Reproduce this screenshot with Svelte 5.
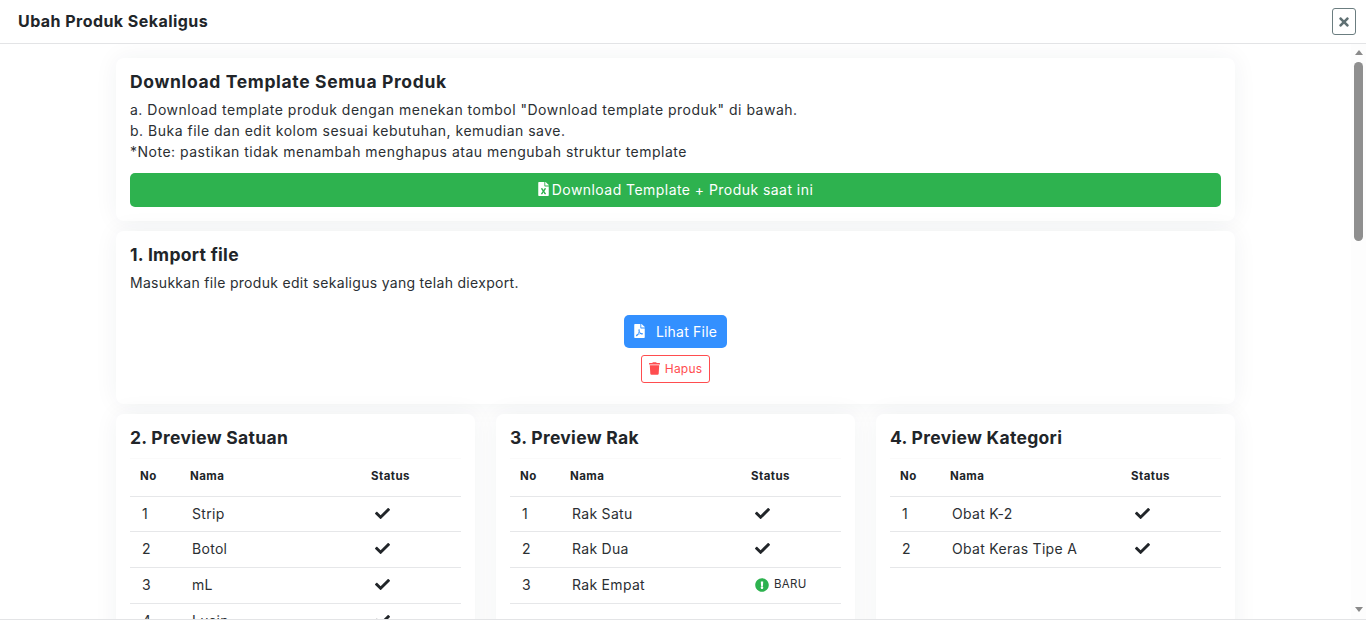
<script lang="ts">
	const CHECK =
		'M173.898 439.404l-166.4-166.4c-9.997-9.997-9.997-26.206 0-36.204l36.203-36.204c9.997-9.998 26.207-9.998 36.204 0L192 312.69 432.095 72.596c9.997-9.997 26.207-9.997 36.204 0l36.203 36.204c9.997 9.997 9.997 26.206 0 36.204l-294.4 294.401c-9.998 9.997-26.207 9.997-36.204-.001z';
	const ALERT =
		'M504 256c0 136.997-111.043 248-248 248S8 392.997 8 256C8 119.083 119.043 8 256 8s248 111.083 248 248zm-248 50c-25.405 0-46 20.595-46 46s20.595 46 46 46 46-20.595 46-46-20.595-46-46-46zm-43.673-165.346l7.418 136c.347 6.364 5.609 11.346 11.982 11.346h48.546c6.373 0 11.635-4.982 11.982-11.346l7.418-136c.375-6.874-5.098-12.654-11.982-12.654h-63.383c-6.884 0-12.356 5.78-11.981 12.654z';

	const previews = [
		{
			title: '2. Preview Satuan',
			rows: [
				{ name: 'Strip', isNew: false },
				{ name: 'Botol', isNew: false },
				{ name: 'mL', isNew: false },
				{ name: 'Lusin', isNew: false }
			]
		},
		{
			title: '3. Preview Rak',
			rows: [
				{ name: 'Rak Satu', isNew: false },
				{ name: 'Rak Dua', isNew: false },
				{ name: 'Rak Empat', isNew: true }
			]
		},
		{
			title: '4. Preview Kategori',
			rows: [
				{ name: 'Obat K-2', isNew: false },
				{ name: 'Obat Keras Tipe A', isNew: false }
			]
		}
	];
</script>

<div class="modal">
	<header class="modal-head">
		<h1>Ubah Produk Sekaligus</h1>
		<button type="button" class="close-btn" aria-label="Tutup">
			<svg viewBox="0 0 352 512" width="10" height="14"><path fill="currentColor" d="M242.72 256l100.07-100.07c12.28-12.28 12.28-32.19 0-44.48l-22.24-22.24c-12.28-12.28-32.19-12.28-44.48 0L176 189.28 75.93 89.21c-12.28-12.28-32.19-12.28-44.48 0L9.21 111.45c-12.28 12.28-12.28 32.19 0 44.48L109.28 256 9.21 356.07c-12.28 12.28-12.28 32.19 0 44.48l22.24 22.24c12.28 12.28 32.2 12.28 44.48 0L176 322.72l100.07 100.07c12.28 12.28 32.2 12.28 44.48 0l22.24-22.24c12.28-12.28 12.28-32.19 0-44.48L242.72 256z"/></svg>
		</button>
	</header>

	<div class="modal-body">
		<div class="content">
			<section class="card">
				<h2 class="wide">Download Template Semua Produk</h2>
				<p class="steps">
					a. Download template produk dengan menekan tombol "Download template produk" di bawah.<br />
					b. Buka file dan edit kolom sesuai kebutuhan, kemudian save.<br />
					*Note: pastikan tidak menambah menghapus atau mengubah struktur template
				</p>
				<button type="button" class="btn-download">
					<svg viewBox="0 0 384 512" width="11" height="14"><path fill="currentColor" d="M224 136V0H24C10.7 0 0 10.7 0 24v464c0 13.3 10.7 24 24 24h336c13.3 0 24-10.7 24-24V160H248c-13.2 0-24-10.8-24-24zm60.1 106.5L224 336l60.1 93.5c5.1 8-.6 18.5-10.1 18.5h-34.9c-4.4 0-8.5-2.4-10.6-6.3C208.9 405.5 192 373 192 373c-6.1 14.1-9.5 19.1-36.6 68.8-2.1 3.9-6.1 6.3-10.5 6.3H110c-9.5 0-15.2-10.5-10.1-18.5l60.3-93.5-60.3-93.5c-5.2-8 .6-18.5 10.1-18.5h34.8c4.4 0 8.5 2.4 10.6 6.3 26.1 48.8 20 33.6 36.6 68.5 0 0 6.1-11.7 36.6-68.5 2.1-3.9 6.2-6.3 10.6-6.3H274c9.5-.1 15.2 10.4 10.1 18.4zM384 121.9v6.1H256V0h6.1c6.4 0 12.5 2.5 17 7l97.9 98c4.5 4.5 7 10.6 7 16.9z"/></svg>
					Download Template + Produk saat ini
				</button>
			</section>

			<section class="card import">
				<h2>1. Import file</h2>
				<p class="import-desc">Masukkan file produk edit sekaligus yang telah diexport.</p>
				<div class="file-actions">
					<button type="button" class="btn-file">
						<svg viewBox="0 0 384 512" width="11" height="14"><path fill="currentColor" d="M181.9 256.1c-5-16-4.9-46.9-2-46.9 8.4 0 7.6 36.9 2 46.9zm-1.7 47.2c-7.7 20.2-17.3 43.3-28.4 62.7 18.3-7 39-17.2 62.9-21.9-12.7-9.6-24.9-23.4-34.5-40.8zM86.1 428.1c0 .8 13.2-5.4 34.9-40.2-6.7 6.3-29.1 24.5-34.9 40.2zM248 160h136v328c0 13.3-10.7 24-24 24H24c-13.3 0-24-10.7-24-24V24C0 10.7 10.7 0 24 0h200v136c0 13.2 10.8 24 24 24zm-8 171.8c-20-12.2-33.3-29-42.7-53.8 4.5-18.5 11.6-46.6 6.2-64.2-4.7-29.4-42.4-26.5-47.8-6.8-5 18.3-.4 44.1 8.1 77-11.6 27.6-28.7 64.6-40.8 85.8-.1 0-.1.1-.2.1-27.1 13.9-73.6 44.5-54.5 68 5.6 6.9 16 10 21.5 10 17.9 0 35.7-18 61.1-61.8 25.8-8.5 54.1-19.1 79-23.2 21.7 11.8 47.1 19.5 64 19.5 29.2 0 31.2-32 19.7-43.4-13.9-13.6-54.3-9.7-73.6-7.2zM377 105L279 7c-4.5-4.5-10.6-7-17-7h-6v128h128v-6.1c0-6.3-2.5-12.4-7-16.9zm-74.1 255.3c4.1-2.7-2.5-11.9-42.8-9 37.1 15.8 42.8 9 42.8 9z"/></svg>
						Lihat File
					</button>
					<button type="button" class="btn-remove">
						<svg viewBox="0 0 448 512" width="11" height="13"><path fill="currentColor" d="M432 32H312l-9.4-18.7A24 24 0 0 0 281.1 0H166.8a23.72 23.72 0 0 0-21.4 13.3L136 32H16A16 16 0 0 0 0 48v32a16 16 0 0 0 16 16h416a16 16 0 0 0 16-16V48a16 16 0 0 0-16-16zM53.2 467a48 48 0 0 0 47.9 45h245.8a48 48 0 0 0 47.9-45L416 128H32z"/></svg>
						Hapus
					</button>
				</div>
			</section>

			<div class="preview-grid">
				{#each previews as preview (preview.title)}
					<section class="card">
						<h2>{preview.title}</h2>
						<table>
							<thead>
								<tr>
									<th class="col-no">No</th>
									<th>Nama</th>
									<th class="col-status">Status</th>
								</tr>
							</thead>
							<tbody>
								{#each preview.rows as row, i (row.name)}
									<tr>
										<td>{i + 1}</td>
										<td>{row.name}</td>
										<td>
											{#if row.isNew}
												<span class="badge-new">
													<svg viewBox="0 0 512 512" width="14" height="14"><path fill="#2db24f" d={ALERT} /></svg>
													BARU
												</span>
											{:else}
												<svg class="check" viewBox="0 0 512 512" width="15" height="15"><path fill="currentColor" d={CHECK} /></svg>
											{/if}
										</td>
									</tr>
								{/each}
							</tbody>
						</table>
					</section>
				{/each}
			</div>
		</div>

		<div class="scrollbar" aria-hidden="true">
			<span class="arrow up"></span>
			<span class="thumb"></span>
			<span class="arrow down"></span>
		</div>
	</div>

	<footer class="modal-foot"></footer>
</div>

<style>
	:global(body) {
		margin: 0;
		background: #fff;
	}

	.modal {
		height: 100vh;
		display: flex;
		flex-direction: column;
		overflow: hidden;
		font-family: Inter, 'Liberation Sans', sans-serif;
		font-size: 14px;
		line-height: 21px;
		letter-spacing: 0.3px;
		color: #2b2f33;
	}

	.modal-head {
		flex: none;
		height: 43px;
		padding: 0 10px 0 18px;
		display: flex;
		align-items: center;
		justify-content: space-between;
		background: #fff;
		border-bottom: 1px solid #e3e4e6;
	}

	.modal-head h1 {
		margin: 0;
		font-size: 16px;
		font-weight: 700;
		letter-spacing: 0.45px;
		color: #212529;
	}

	.close-btn {
		width: 24px;
		height: 27px;
		padding: 0;
		display: flex;
		align-items: center;
		justify-content: center;
		background: #fff;
		border: 1px solid #6b7d80;
		border-radius: 3px;
		color: #5f7073;
	}

	.modal-body {
		flex: 1;
		min-height: 0;
		display: flex;
		overflow: hidden;
	}

	.content {
		flex: 1;
		min-width: 0;
		padding: 14px 116px 0;
		display: flex;
		flex-direction: column;
		gap: 10px;
	}

	.content > * {
		flex: none;
	}

	.card {
		padding: 14px;
		background: #fff;
		border-radius: 8px;
		box-shadow: 0 0 24px rgba(31, 45, 61, 0.06);
	}

	.card h2 {
		margin: 0;
		font-size: 17.5px;
		line-height: 20px;
		font-weight: 700;
		letter-spacing: 0.3px;
		color: #212529;
	}

	.card h2.wide {
		letter-spacing: 0.65px;
	}

	.steps {
		margin: 7px 0 11px;
		letter-spacing: 0.5px;
	}

	.btn-download {
		width: 100%;
		height: 34px;
		padding-bottom: 3px;
		display: flex;
		align-items: center;
		justify-content: center;
		gap: 3px;
		font: inherit;
		letter-spacing: 0.45px;
		color: #fff;
		background: #2eb24f;
		border: none;
		border-radius: 5px;
	}

	.import {
		height: 173px;
		box-sizing: border-box;
	}

	.import-desc {
		margin: 7px 0 0;
	}

	.file-actions {
		margin-top: 22px;
		display: flex;
		flex-direction: column;
		align-items: center;
		gap: 7px;
	}

	.btn-file {
		width: 103px;
		height: 33px;
		padding: 0 0 1px;
		display: flex;
		align-items: center;
		justify-content: center;
		gap: 11px;
		font: inherit;
		letter-spacing: 0.2px;
		color: #fff;
		background: #3390ff;
		border: none;
		border-radius: 5px;
	}

	.btn-remove {
		width: 69px;
		height: 28px;
		padding: 0 0 1px;
		display: flex;
		align-items: center;
		justify-content: center;
		gap: 5px;
		font: inherit;
		font-size: 12px;
		letter-spacing: 0.2px;
		color: #ff4d4f;
		background: #fff;
		border: 1px solid #ff4d4f;
		border-radius: 3px;
	}

	.preview-grid {
		display: grid;
		grid-template-columns: repeat(3, 359px);
		justify-content: space-between;
		align-items: stretch;
	}

	table {
		width: 331px;
		margin-top: 10px;
		table-layout: fixed;
		border-collapse: collapse;
	}

	thead tr {
		border-top: 1px solid #fafafa;
	}

	th {
		height: 34px;
		padding: 0 10px 3px;
		text-align: left;
		font-size: 11.5px;
		font-weight: 700;
		letter-spacing: 0.45px;
		color: #212529;
		border-bottom: 1px solid #e6e7e9;
	}

	.col-no {
		width: 30px;
	}

	.col-status {
		width: 80px;
	}

	td {
		height: 33px;
		padding: 0 12px 2px;
		border-bottom: 1px solid #e6e7e9;
	}

	tbody tr:first-child td {
		height: 32px;
	}

	.check {
		display: block;
		margin-left: 2px;
		color: #212529;
	}

	.badge-new {
		display: flex;
		align-items: center;
		gap: 5px;
		margin-left: 2px;
		font-size: 11.5px;
	}

	.scrollbar {
		flex: none;
		width: 15px;
		background: #fdfdfd;
		display: flex;
		flex-direction: column;
		align-items: center;
	}

	.thumb {
		width: 9px;
		height: 179px;
		margin-top: 7px;
		background: #8f8f8f;
		border-radius: 5px;
	}

	.arrow {
		width: 0;
		height: 0;
		border-left: 4px solid transparent;
		border-right: 4px solid transparent;
	}

	.arrow.up {
		margin-top: 6px;
		border-bottom: 5px solid #8a8a8a;
	}

	.arrow.down {
		margin-top: auto;
		margin-bottom: 7px;
		border-top: 5px solid #8a8a8a;
	}

	.modal-foot {
		flex: none;
		height: 21px;
		background: #fff;
		border-top: 1px solid #e3e4e6;
	}
</style>
